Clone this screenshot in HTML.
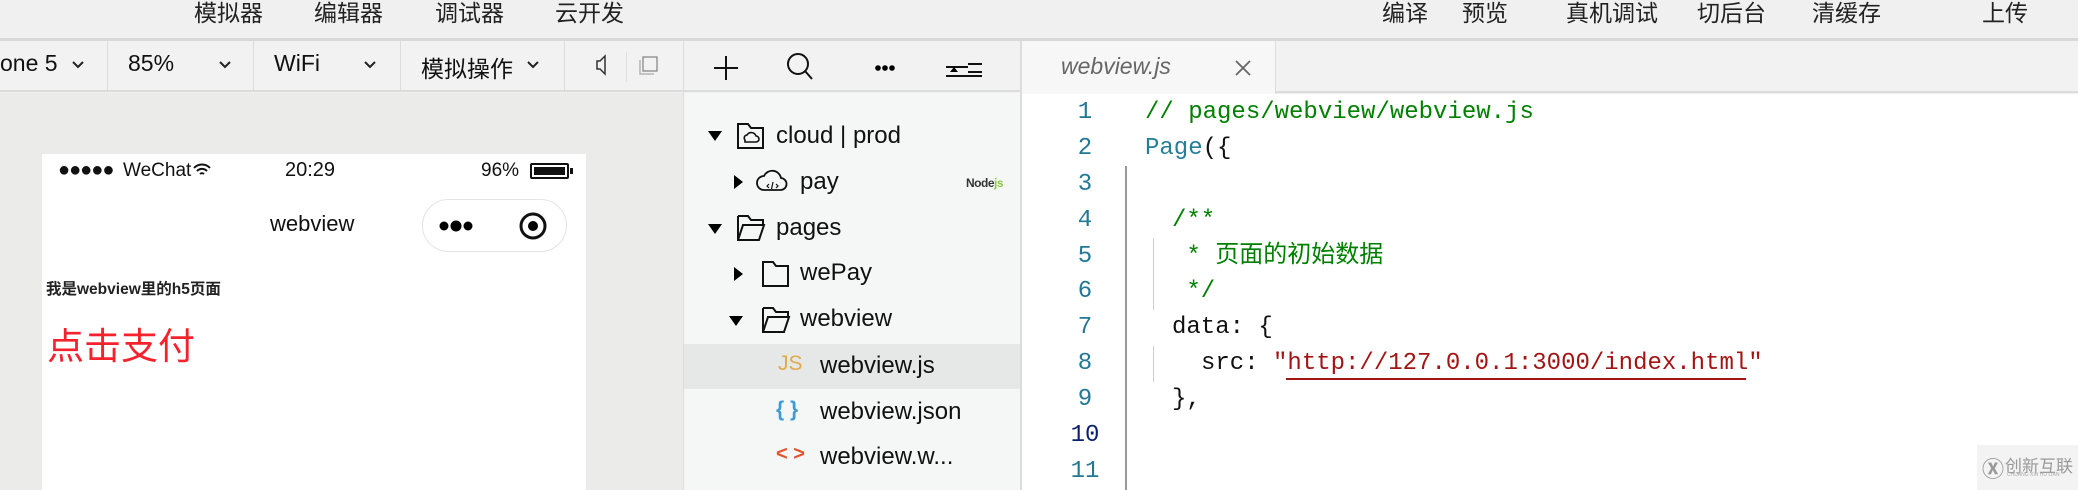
<!DOCTYPE html>
<html><head><meta charset="utf-8"><style>
*{margin:0;padding:0;box-sizing:border-box}
body{width:2078px;height:490px;overflow:hidden;background:#f0f0f0;font-family:"Liberation Sans","Noto Sans CJK SC",sans-serif;position:relative;color:#111}
.a{position:absolute;white-space:nowrap}
.menu{font-size:23px;top:-6px;color:#222}
.tb{font-size:23px;color:#111}
.mono{font-family:"Liberation Mono","Noto Sans CJK SC",monospace;font-size:24px;line-height:30px}
.ln{color:#237893;width:40px;text-align:center;left:1065px}
.tr{font-size:24px;color:#111}
</style></head><body>
<!-- top menu -->
<div class="a menu" style="left:194px">模拟器</div>
<div class="a menu" style="left:314px">编辑器</div>
<div class="a menu" style="left:435px">调试器</div>
<div class="a menu" style="left:555px">云开发</div>
<div class="a menu" style="left:1382px">编译</div>
<div class="a menu" style="left:1462px">预览</div>
<div class="a menu" style="left:1566px">真机调试</div>
<div class="a menu" style="left:1697px">切后台</div>
<div class="a menu" style="left:1812px">清缓存</div>
<div class="a menu" style="left:1982px">上传</div>
<div class="a" style="left:0;top:38px;width:2078px;height:3px;background:#d8d8d8"></div>

<!-- simulator toolbar -->
<div class="a" style="left:0;top:41px;width:683px;height:51px;background:#f2f2f2;border-bottom:2px solid #dcdcdc"></div>
<div class="a" style="left:107px;top:41px;width:1px;height:51px;background:#dcdcdc"></div>
<div class="a" style="left:253px;top:41px;width:1px;height:51px;background:#dcdcdc"></div>
<div class="a" style="left:400px;top:41px;width:1px;height:51px;background:#dcdcdc"></div>
<div class="a" style="left:564px;top:41px;width:1px;height:51px;background:#dcdcdc"></div>
<div class="a" style="left:626px;top:52px;width:1px;height:30px;background:#e0e0e0"></div>
<div class="a tb" style="left:0;top:50px">one 5</div>
<div class="a tb" style="left:128px;top:50px">85%</div>
<div class="a tb" style="left:274px;top:50px">WiFi</div>
<div class="a tb" style="left:421px;top:50px">模拟操作</div>
<svg class="a" style="left:0;top:41px" width="683" height="51">
<g fill="none" stroke="#222" stroke-width="2"><path d="M73 21l5 5 5-5"/><path d="M220 21l5 5 5-5"/><path d="M365 21l5 5 5-5"/><path d="M528 21l5 5 5-5"/></g>
<path d="M597 20h3l5-5v18l-5-5h-3z" fill="none" stroke="#333" stroke-width="1.5"/>
<rect x="643" y="16" width="14" height="14" fill="none" stroke="#888" stroke-width="1.3"/><path d="M640 19v14h14" fill="none" stroke="#aaa" stroke-width="1.3"/>
</svg>
<div class="a" style="left:683px;top:41px;width:1px;height:449px;background:#dcdcdc"></div>

<!-- simulator area -->
<div class="a" style="left:0;top:93px;width:683px;height:397px;background:#ebebe9"></div>
<div class="a" style="left:42px;top:154px;width:544px;height:336px;background:#fff"></div>
<div class="a" style="left:58px;top:159px;font-size:20px;color:#111;letter-spacing:-1px">●●●●●</div>
<div class="a" style="left:123px;top:160px;font-size:19px">WeChat</div>
<svg class="a" style="left:193px;top:163px" width="18" height="14"><path d="M1 5a11 11 0 0 1 16 0M4 8a7 7 0 0 1 10 0M7 11a3 3 0 0 1 4 0" fill="none" stroke="#111" stroke-width="2"/></svg>
<div class="a" style="left:285px;top:159px;font-size:20px">20:29</div>
<div class="a" style="left:481px;top:160px;font-size:19px">96%</div>
<div class="a" style="left:530px;top:163px;width:39px;height:16px;border:2px solid #111;border-radius:2px;padding:2px"><div style="width:31px;height:8px;background:#111"></div></div>
<div class="a" style="left:570px;top:168px;width:3px;height:6px;background:#111"></div>
<div class="a" style="left:270px;top:211px;font-size:22px">webview</div>
<div class="a" style="left:422px;top:199px;width:145px;height:53px;border:1.5px solid #e3e3e3;border-radius:27px"></div>
<svg class="a" style="left:438px;top:212px" width="120" height="28"><circle cx="6" cy="14" r="4.5"/><circle cx="18" cy="14" r="5.5"/><circle cx="30" cy="14" r="4.5"/><circle cx="95" cy="14" r="12" fill="none" stroke="#111" stroke-width="3"/><circle cx="95" cy="14" r="5"/></svg>
<div class="a" style="left:46px;top:277px;font-size:15.5px;font-weight:bold;color:#222">我是webview里的h5页面</div>
<div class="a" style="left:47px;top:316px;font-size:37px;color:#f5222d">点击支付</div>

<!-- file tree -->
<div class="a" style="left:684px;top:41px;width:336px;height:51px;background:#f2f2f2;border-bottom:2px solid #dcdcdc"></div>
<div class="a" style="left:684px;top:93px;width:336px;height:397px;background:#f5f6f6"></div>
<div class="a" style="left:684px;top:344px;width:336px;height:45px;background:#e6e7e7"></div>
<div class="a" style="left:1020px;top:41px;width:2px;height:449px;background:#dcdcdc"></div>
<svg class="a" style="left:684px;top:41px" width="336" height="449">
<g fill="none" stroke="#111" stroke-width="2">
<path d="M42 15v24M30 27h24"/>
<circle cx="114" cy="23" r="10"/><path d="M121 30l7 8"/>
<path d="M262 26h22M284 23h14M284 31h14M262 35h36" /></g>
<circle cx="194" cy="27" r="2.8"/><circle cx="201" cy="27" r="2.8"/><circle cx="208" cy="27" r="2.8"/>
<path d="M266 31l4-5 4 5z"/>
<path d="M24 90h14l-7 10z"/>
<g fill="none" stroke="#111" stroke-width="2"><path d="M54 83h10l3 4h12v20H54z"/><path d="M61 99a3 3 0 0 1 2-5a5 5 0 0 1 9 1a3 3 0 0 1 0 6h-11z" stroke-width="1.6"/></g>
<path d="M50 134v14l9-7z"/>
<path d="M80 149h16a6 6 0 0 0 1-12a9 9 0 0 0-17-2a7 7 0 0 0 0 14z" fill="none" stroke="#111" stroke-width="1.8"/>
<path d="M85 143l-2 2 2 2M92 143l2 2-2 2M89 141l-1.5 7" fill="none" stroke="#111" stroke-width="1.2"/>
<path d="M24 183h14l-7 10z"/>
<path d="M54 175h10l3 4h12v5M54 175v24h21l5-15H59l-5 15" fill="none" stroke="#111" stroke-width="2"/>
<path d="M50 226v14l9-7z"/>
<path d="M79 221h10l3 4h12v20H79z" fill="none" stroke="#111" stroke-width="2"/>
<path d="M45 275h14l-7 10z"/>
<path d="M79 267h10l3 4h12v5M79 267v24h21l5-15H84l-5 15" fill="none" stroke="#111" stroke-width="2"/>
</svg>
<div class="a tr" style="left:776px;top:122px">cloud | prod</div>
<div class="a tr" style="left:800px;top:168px">pay</div>
<div class="a" style="left:966px;top:176px;font-size:12px;font-weight:bold;color:#333;letter-spacing:-0.5px">Node<span style="color:#8cc84b">js</span></div>
<div class="a tr" style="left:776px;top:214px">pages</div>
<div class="a tr" style="left:800px;top:259px">wePay</div>
<div class="a tr" style="left:800px;top:305px">webview</div>
<div class="a" style="left:778px;top:352px;font-size:21px;color:#e3a94a">JS</div>
<div class="a tr" style="left:820px;top:352px">webview.js</div>
<div class="a" style="left:776px;top:398px;font-size:21px;color:#3b9bd8;font-weight:bold">{ }</div>
<div class="a tr" style="left:820px;top:398px">webview.json</div>
<div class="a" style="left:776px;top:443px;font-size:20px;color:#e5532d;font-weight:bold">&lt; &gt;</div>
<div class="a tr" style="left:820px;top:443px">webview.w...</div>

<!-- editor -->
<div class="a" style="left:1022px;top:41px;width:1056px;height:52px;background:#f2f2f2;border-bottom:2px solid #dcdcdc"></div>
<div class="a" style="left:1022px;top:41px;width:254px;height:53px;background:#f7f7f7;border-right:1px solid #dcdcdc"></div>
<div class="a" style="left:1061px;top:53px;font-size:23px;font-style:italic;color:#666">webview.js</div>
<svg class="a" style="left:1234px;top:59px" width="18" height="18"><path d="M2 2l14 14M16 2L2 16" stroke="#666" stroke-width="1.8"/></svg>
<div class="a" style="left:1022px;top:94px;width:1056px;height:396px;background:#fff"></div>
<div class="a" style="left:1125px;top:166px;width:2px;height:324px;background:#999"></div>
<div class="a" style="left:1153px;top:238px;width:1px;height:72px;background:#ccc"></div>
<div class="a" style="left:1153px;top:346px;width:1px;height:36px;background:#ccc"></div>
<div class="a mono ln" style="top:98px">1</div>
<div class="a mono ln" style="top:134px">2</div>
<div class="a mono ln" style="top:170px">3</div>
<div class="a mono ln" style="top:206px">4</div>
<div class="a mono ln" style="top:242px">5</div>
<div class="a mono ln" style="top:277px">6</div>
<div class="a mono ln" style="top:313px">7</div>
<div class="a mono ln" style="top:349px">8</div>
<div class="a mono ln" style="top:385px">9</div>
<div class="a mono ln" style="top:421px;color:#0b216f">10</div>
<div class="a mono ln" style="top:457px">11</div>
<div class="a mono" style="left:1145px;top:98px;color:#008000">// pages/webview/webview.js</div>
<div class="a mono" style="left:1145px;top:134px;color:#267f99">Page<span style="color:#111">({</span></div>
<div class="a mono" style="left:1172px;top:206px;color:#008000">/**</div>
<div class="a mono" style="left:1172px;top:242px;color:#008000">&nbsp;* 页面的初始数据</div>
<div class="a mono" style="left:1172px;top:277px;color:#008000">&nbsp;*/</div>
<div class="a mono" style="left:1172px;top:313px;color:#111">data: {</div>
<div class="a mono" style="left:1201px;top:349px;color:#111">src: <span style="color:#a31515">"http://127.0.0.1:3000/index.html"</span></div>
<div class="a" style="left:1286px;top:378px;width:460px;height:2px;background:#a31515"></div>
<div class="a mono" style="left:1172px;top:385px;color:#111">},</div>

<!-- watermark -->
<div class="a" style="left:1977px;top:445px;width:101px;height:45px;background:#f3f3f3"></div>
<div class="a" style="left:1982px;top:452px;font-size:22px;color:#999;font-weight:bold">Ⓧ</div>
<div class="a" style="left:2005px;top:452px;font-size:17px;color:#999">创新互联</div>
<div class="a" style="left:2007px;top:472px;font-size:5px;color:#aaa">CHUANG XIN HU LIAN</div>
</body></html>
